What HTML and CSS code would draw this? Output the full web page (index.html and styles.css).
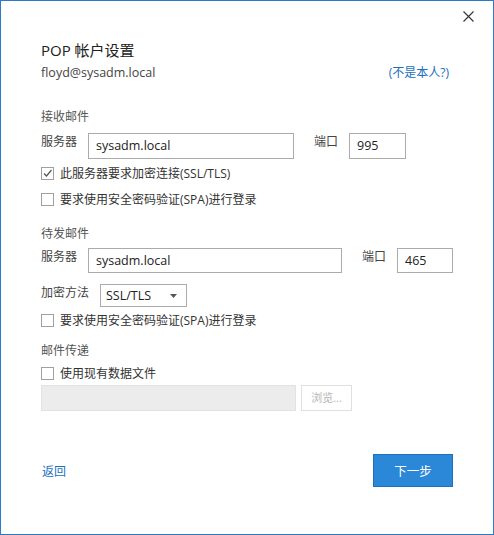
FILE: index.html
```html
<!DOCTYPE html>
<html lang="zh-CN">
<head>
<meta charset="utf-8">
<title>POP 帐户设置</title>
<link rel="stylesheet" href="styles.css">
</head>
<body>
<div class="dialog">
  <button class="close" aria-label="关闭">
    <svg width="11" height="11" viewBox="0 0 11 11"><path d="M0.5 0.5L10.5 10.5M10.5 0.5L0.5 10.5" stroke="#333" stroke-width="1.1" fill="none"/></svg>
  </button>

  <div class="title">POP 帐户设置</div>
  <div class="account">
    <span class="email">floyd@sysadm.local</span>
    <a class="link">(不是本人?)</a>
  </div>

  <div class="section sec-recv">接收邮件</div>
  <div class="row row-recv">
    <span class="lbl lbl-server">服务器</span>
    <div class="input in-server1">sysadm.local</div>
    <span class="lbl lbl-port">端口</span>
    <div class="input in-port1">995</div>
  </div>
  <label class="check cb1">
    <span class="box"><svg width="11" height="11" viewBox="0 0 11 11"><path d="M2 5.5L4.5 8L9.5 2" stroke="#555" stroke-width="1.2" fill="none"/></svg></span>
    <span>此服务器要求加密连接(SSL/TLS)</span>
  </label>
  <label class="check cb2">
    <span class="box"></span>
    <span>要求使用安全密码验证(SPA)进行登录</span>
  </label>

  <div class="section sec-send">待发邮件</div>
  <div class="row row-send">
    <span class="lbl lbl-server">服务器</span>
    <div class="input in-server2">sysadm.local</div>
    <span class="lbl lbl-port">端口</span>
    <div class="input in-port2">465</div>
  </div>
  <div class="row row-enc">
    <span class="lbl lbl-enc">加密方法</span>
    <div class="select">
      <span>SSL/TLS</span>
      <svg width="7" height="4" viewBox="0 0 7 4"><path d="M0 0H7L3.5 4Z" fill="#555"/></svg>
    </div>
  </div>
  <label class="check cb3">
    <span class="box"></span>
    <span>要求使用安全密码验证(SPA)进行登录</span>
  </label>

  <div class="section sec-deliv">邮件传递</div>
  <label class="check cb4">
    <span class="box"></span>
    <span>使用现有数据文件</span>
  </label>
  <div class="row row-file">
    <div class="input disabled"></div>
    <div class="browse">浏览...</div>
  </div>

  <div class="footer">
    <a class="link back">返回</a>
    <button class="next">下一步</button>
  </div>
</div>
</body>
</html>
```
FILE: styles.css
```css
html, body {
  margin: 0;
  padding: 0;
  background: #fff;
}
body {
  font-family: "Open Sans", "Noto Sans CJK SC", sans-serif;
  font-size: 12px;
  color: #333;
}
.dialog {
  position: relative;
  box-sizing: border-box;
  width: 494px;
  height: 535px;
  border: 1px solid #2b7ac6;
  padding: 39px 40px 0 40px;
  display: flex;
  flex-direction: column;
}
.close {
  position: absolute;
  top: 10px;
  right: 19px;
  width: 11px;
  height: 11px;
  padding: 0;
  border: 0;
  background: none;
  display: block;
}
.close svg { display: block; }
.title {
  height: 21px;
  line-height: 21px;
  font-size: 15px;
  color: #222;
}
.account {
  margin-top: 1px;
  height: 20px;
  display: flex;
  justify-content: space-between;
  align-items: center;
  font-size: 12.5px;
}
.email { color: #444; }
.link {
  color: #1a6fc1;
  font-size: 12px;
}
.account .link { margin-right: 4px; }
.section {
  height: 20px;
  line-height: 20px;
  color: #555;
}
.sec-recv { margin-top: 25px; }
.sec-send { margin-top: 15px; }
.sec-deliv { margin-top: 11px; }
.row {
  display: flex;
  align-items: flex-start;
}
.row-recv { margin-top: 6px; }
.row-send { margin-top: 4px; }
.row-enc { margin-top: 11px; }
.row-file { margin-top: 2px; }
.lbl {
  line-height: 17px;
  color: #444;
}
.lbl-server { width: 47px; }
.lbl-port { width: 35px; margin-left: 20px; }
.lbl-enc { width: 59px; }
.input {
  box-sizing: border-box;
  height: 26px;
  border: 1px solid #ababab;
  padding: 0 7px;
  line-height: 24px;
  font-size: 12.5px;
  color: #222;
}
.in-server1 { width: 206px; }
.in-port1 { width: 57px; }
.in-server2 { width: 254px; height: 25px; line-height: 23px; }
.in-port2 { width: 56px; height: 25px; line-height: 23px; }
.select {
  box-sizing: border-box;
  width: 87px;
  height: 23px;
  border: 1px solid #ababab;
  padding: 0 9px 0 5px;
  display: flex;
  align-items: center;
  justify-content: space-between;
  font-size: 12.5px;
  color: #222;
}
.select svg { display: block; }
.check {
  height: 20px;
  display: flex;
  align-items: center;
  gap: 6px;
  color: #333;
}
.cb1 { margin-top: 4px; }
.cb2 { margin-top: 6px; }
.cb3 { margin-top: 3px; }
.cb4 { margin-top: 2px; }
.box {
  box-sizing: border-box;
  width: 13px;
  height: 13px;
  border: 1px solid #a0a0a0;
  background: #fff;
  display: flex;
  align-items: center;
  justify-content: center;
}
.box svg { display: block; }
.disabled {
  width: 255px;
  background: #ececec;
  border-color: #e2e2e2;
}
.browse {
  box-sizing: border-box;
  width: 51px;
  height: 26px;
  margin-left: 5px;
  border: 1px solid #e0e0e0;
  background: #fff;
  color: #b4b4b4;
  font-size: 11px;
  line-height: 24px;
  text-align: center;
}
.footer {
  margin-top: 43px;
  display: flex;
  justify-content: space-between;
  align-items: center;
}
.back { margin-left: 1px; }
.next {
  box-sizing: border-box;
  width: 80px;
  height: 33px;
  border: 1px solid #1f6fbe;
  background: #2b88d8;
  color: #fff;
  font-family: inherit;
  font-size: 12.5px;
  padding: 0;
}
```
